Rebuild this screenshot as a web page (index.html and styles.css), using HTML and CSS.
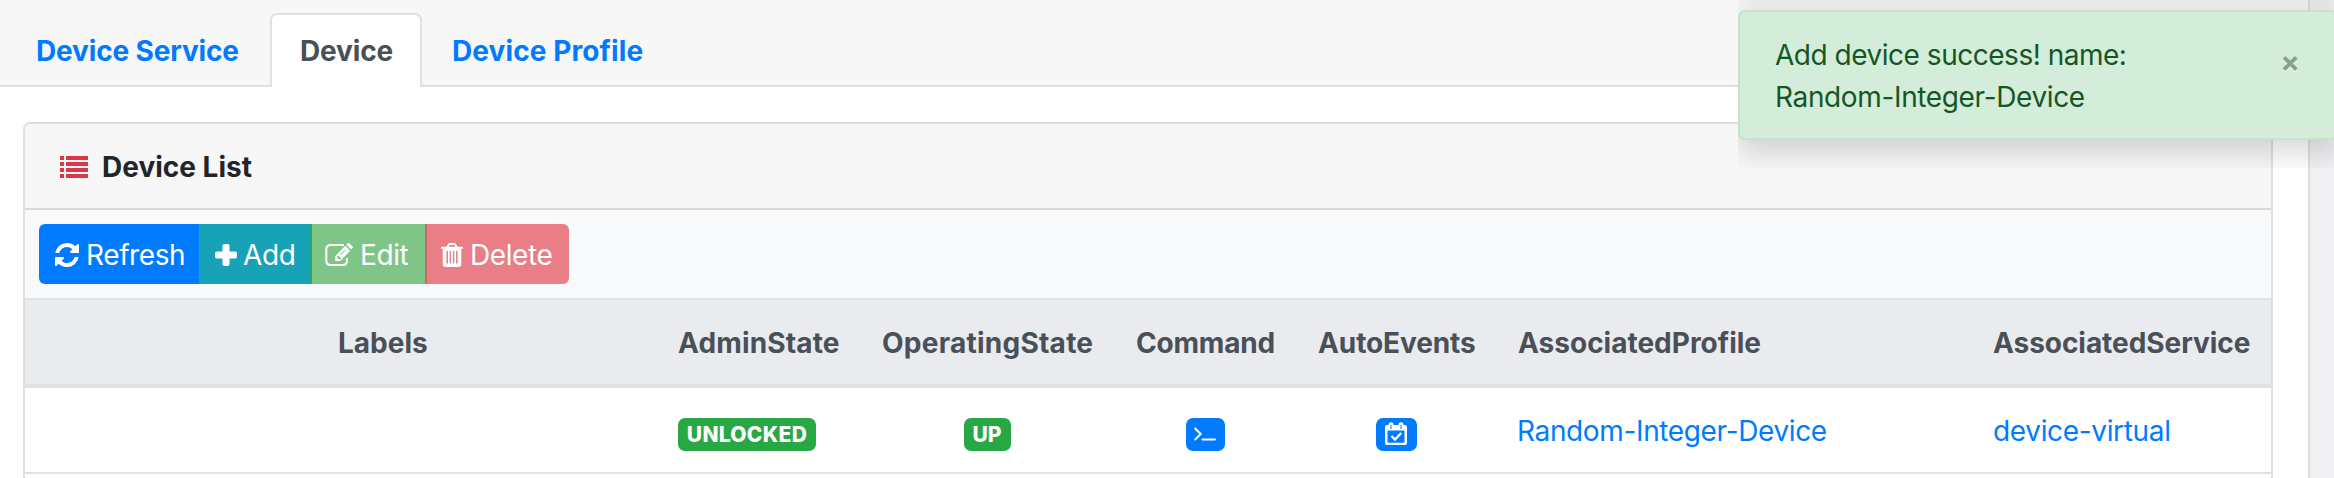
FILE: index.html
```html
<!DOCTYPE html>
<html lang="en">
<head>
<meta charset="utf-8">
<title>Device List</title>
<link rel="stylesheet" href="styles.css">
</head>
<body>
<div class="page">
  <main class="panel">
    <nav class="tabs">
      <a class="tab"><span class="t-service">Device Service</span></a>
      <a class="tab active"><span class="t-device">Device</span></a>
      <a class="tab"><span class="t-profile">Device Profile</span></a>
    </nav>
    <section class="card">
      <header class="card-header">
        <svg class="i-list" viewBox="0 0 28 22"><path d="M0 0h4v4H0zM6 0h22v4H6zM0 6h4v4H0zM6 6h22v4H6zM0 12h4v4H0zM6 12h22v4H6zM0 18h4v4H0zM6 18h22v4H6z"/></svg>
        <span class="t-list">Device List</span>
      </header>
      <div class="toolbar">
        <button class="btn refresh"><svg class="i-refresh" viewBox="0 0 1536 1536"><path d="M1511 928q0 5-1 7-64 268-268 434.500T764 1536q-146 0-282.500-55T238 1324l-129 129q-19 19-45 19t-45-19-19-45V960q0-26 19-45t45-19h448q26 0 45 19t19 45-19 45l-137 137q71 66 161 102t187 36q134 0 250-65t186-179q11-17 53-117 8-23 30-23h192q13 0 22.500 9.500t9.500 22.500zm25-800v448q0 26-19 45t-45 19h-448q-26 0-45-19t-19-45 19-45l138-138Q969 256 768 256q-134 0-250 65T332 500q-11 17-53 117-8 23-30 23H50q-13 0-22.500-9.500T18 608v-7q65-268 270-434.500T768 0q146 0 284 55.500T1297 212l130-129q19-19 45-19t45 19 19 45z"/></svg><span class="t-refresh">Refresh</span></button>
        <button class="btn add"><svg class="i-plus" viewBox="0 0 22 22"><path d="M9.300 0h3.400q1.800 0 1.800 1.800v5.700h5.700Q22 7.500 22 9.300v3.400q0 1.800-1.800 1.800h-5.700v5.700q0 1.800-1.800 1.800H9.300q-1.800 0-1.800-1.800v-5.700H1.800Q0 14.500 0 12.700V9.300Q0 7.500 1.800 7.500h5.700V1.800Q7.500 0 9.300 0z"/></svg><span class="t-add">Add</span></button>
        <button class="btn edit"><svg class="i-edit" viewBox="0 0 28 24"><path class="line" d="M19 2H6Q1.300 2 1.300 6.500v11Q1.300 22 6 22h11.500q4.500 0 4.500-4.500V15"/><path fill-rule="evenodd" d="M20.300 2.800l4.900 4.900L15.200 18h-4.900v-5zM12 14v1.200h1.500v1.500h1.300l1.300-1.300-2.800-2.800zM15 11.700l.6.6 5.200-5.300-.6-.6zM21.400 1.700l1.300-1.300q.9-.8 1.800 0l3 3q.8.900 0 1.800l-1.300 1.400z"/></svg><span class="t-edit">Edit</span></button>
        <button class="btn delete"><svg class="i-trash" viewBox="0 0 22 24"><path fill-rule="evenodd" d="M0 3.700h5.500L7 .9Q7.500 0 8.500 0h5q1 0 1.500.9l1.500 2.800H22v2h-1.700V21q0 3-2.800 3h-13q-2.800 0-2.800-3V5.700H0zM7.600 3.700h6.800L13.400 2H8.600zM5.500 8v12.500H7V8zM8.700 8v12.500h1.300V8zM12 8v12.500h1.300V8zM15 8v12.500h1.500V8z"/></svg><span class="t-delete">Delete</span></button>
      </div>
      <table class="devices">
        <colgroup><col class="c-labels"><col class="c-admin"><col class="c-oper"><col class="c-cmd"><col class="c-auto"><col class="c-profile"><col></colgroup>
        <thead>
          <tr>
            <th class="labels"><span class="h-labels">Labels</span></th>
            <th><span class="h-admin">AdminState</span></th>
            <th><span class="h-oper">OperatingState</span></th>
            <th><span class="h-cmd">Command</span></th>
            <th><span class="h-auto">AutoEvents</span></th>
            <th><span class="h-profile">AssociatedProfile</span></th>
            <th><span class="h-service">AssociatedService</span></th>
          </tr>
        </thead>
        <tbody>
          <tr>
            <td></td>
            <td><span class="badge unlocked">UNLOCKED</span></td>
            <td class="center"><span class="badge up">UP</span></td>
            <td class="center"><span class="badge command"><svg class="i-term" viewBox="0 0 22 14"><path d="M1.200 1.500L6.700 7l-5.500 5.500M8.500 12.600H21"/></svg></span></td>
            <td class="center"><span class="badge events"><svg class="i-cal" viewBox="0 0 22 24"><path fill-rule="evenodd" d="M2 3h1.500Q3.500.3 6 .3T8.500 3h5Q13.500.3 16 .3T18.500 3H20q2 0 2 2v16q0 2-2 2H2q-2 0-2-2V5q0-2 2-2zM2.500 8.500V20q0 .8.800.8h15.400q.8 0 .8-.8V8.500z"/><path class="slot" d="M6 3v4M16 3v4"/><path class="tick" d="M6.500 14l3.500 3.600 6.200-6.500"/></svg></span></td>
            <td><a class="d-profile">Random-Integer-Device</a></td>
            <td><a class="d-service">device-virtual</a></td>
          </tr>
        </tbody>
      </table>
    </section>
  </main>
</div>
<div class="toasts">
  <div class="toast">
    <div class="message"><span class="m-one">Add device success! name:</span><br><span class="m-two">Random-Integer-Device</span></div>
    <span class="close">×</span>
  </div>
</div>
</body>
</html>
```
FILE: styles.css
```css
* { box-sizing: border-box; }
body { margin: 0; font: 28px/42px Inter, "Liberation Sans", sans-serif; color: #212529; background: #f0f0f3; overflow: hidden; }
a { color: #007bff; text-decoration: none; }
.page { height: 478px; overflow: hidden; }
.panel { width: 2310px; height: 500px; background: #fff; border-right: 2px solid #dfdfdf; }
.tabs { display: flex; height: 87px; padding: 13px 0 0; background: #f7f7f7; border-bottom: 2px solid #dfdfdf; font-weight: 700; letter-spacing: -.15px; }
.tab { height: 74px; padding: 15px 28px; border: 2px solid transparent; border-bottom: 0; white-space: nowrap; }
.tab:first-child { width: 270px; padding-left: 34px; }
.tab.active { width: 152px; color: #495057; background: #fff; border-color: #dee2e6; border-radius: 7px 7px 0 0; }
.t-profile { letter-spacing: .1px; }
.card { margin: 35px 35px 0 23px; height: 400px; border: 2px solid #dfdfdf; border-radius: 7px; overflow: hidden; }
.card-header { display: flex; align-items: center; height: 86px; padding: 2px 35px 0; background: #f7f7f7; border-bottom: 2px solid #d9d9d9; font-weight: 700; }
.t-list { margin-left: 14px; }
.toolbar { display: flex; height: 88px; padding: 14px; background: #f8f9fb; }
.btn { display: flex; align-items: center; height: 60px; margin: 0; padding: 2px 0 0 16px; border: 0; color: #fff; font: inherit; letter-spacing: -.4px; white-space: nowrap; }
.refresh { width: 160px; background: #007bff; border-radius: 6px 0 0 6px; }
.add { width: 111px; background: #17a2b8; }
.edit { width: 115px; padding-left: 13px; background: #80c588; border-left: 2px solid #26a56f; }
.delete { width: 144px; padding-left: 14px; background: #e97e87; border-left: 2px solid #c66b60; border-radius: 0 6px 6px 0; }
svg { display: block; flex: none; fill: currentColor; }
.i-list { width: 28px; height: 22px; color: #dc3545; }
.i-refresh { width: 24px; height: 24px; }
.i-plus { width: 22px; height: 22px; }
.i-edit { width: 28px; height: 24px; }
.i-edit .line { fill: none; stroke: currentColor; stroke-width: 2; }
.i-trash { width: 22px; height: 24px; }
.t-refresh, .t-edit, .t-delete { margin-left: 7px; }
.t-add { margin-left: 6px; }
.devices { width: 100%; table-layout: fixed; border-collapse: separate; border-spacing: 0; border-top: 2px solid #dee2e6; }
.c-labels { width: 632px; }
.c-admin { width: 204px; }
.c-oper { width: 254px; }
.c-cmd { width: 182px; }
.c-auto { width: 200px; }
.c-profile { width: 475px; }
th { height: 88px; padding: 2px 0 0 21px; background: #eaebef; border-bottom: 4px solid #dee2e6; color: #495057; font-weight: 700; text-align: left; white-space: nowrap; letter-spacing: 0; }
th.labels { padding-left: 313px; }
.h-admin { letter-spacing: .15px; }
.h-oper { letter-spacing: .25px; }
.h-cmd { letter-spacing: -.2px; }
.h-auto { letter-spacing: -.1px; }
.h-service { letter-spacing: -.05px; }
td { height: 86px; padding: 2px 21px 0; border-bottom: 2px solid #dee2e6; white-space: nowrap; }
td.center { padding: 2px 22px 0 20px; text-align: center; }
.d-profile, .m-two { letter-spacing: -.36px; margin-left: -1px; }
.d-service { letter-spacing: -.34px; }
.badge { display: inline-flex; align-items: center; justify-content: center; position: relative; top: 1px; height: 33px; border-radius: 7px; background: #28a745; color: #fff; font-size: 21px; line-height: 33px; font-weight: 800; vertical-align: middle; }
.unlocked { width: 138px; letter-spacing: .3px; }
.up { width: 47px; }
.command { width: 39px; background: #007bff; }
.events { width: 41px; background: #007bff; }
.i-term { width: 22px; height: 14px; fill: none; stroke: #fff; stroke-width: 2; stroke-linecap: round; }
.i-cal { width: 22px; height: 24px; }
.slot { stroke: #007bff; stroke-width: 1; }
.tick { fill: none; stroke: #fff; stroke-width: 2.200; }
.toasts { position: absolute; top: 0; left: 1738px; width: 596px; height: 168px; padding-top: 10px; overflow: hidden; }
.toast { display: flex; justify-content: space-between; width: 600px; height: 130px; padding: 22px 36px 0 35px; background: #d4edda; border: 2px solid #c3e6cb; border-radius: 7px; color: #155724; box-shadow: 0 14px 28px rgba(0,0,0,.15), 0 -116px 28px rgba(0,0,0,.055); white-space: nowrap; }
.m-one { letter-spacing: -.48px; }
.m-two { margin-left: 0; }
.close { font-size: 29px; font-weight: 700; color: #000; opacity: .4; text-shadow: 0 2px 0 #fff; line-height: 55px; color: #0b3a17; }
```
